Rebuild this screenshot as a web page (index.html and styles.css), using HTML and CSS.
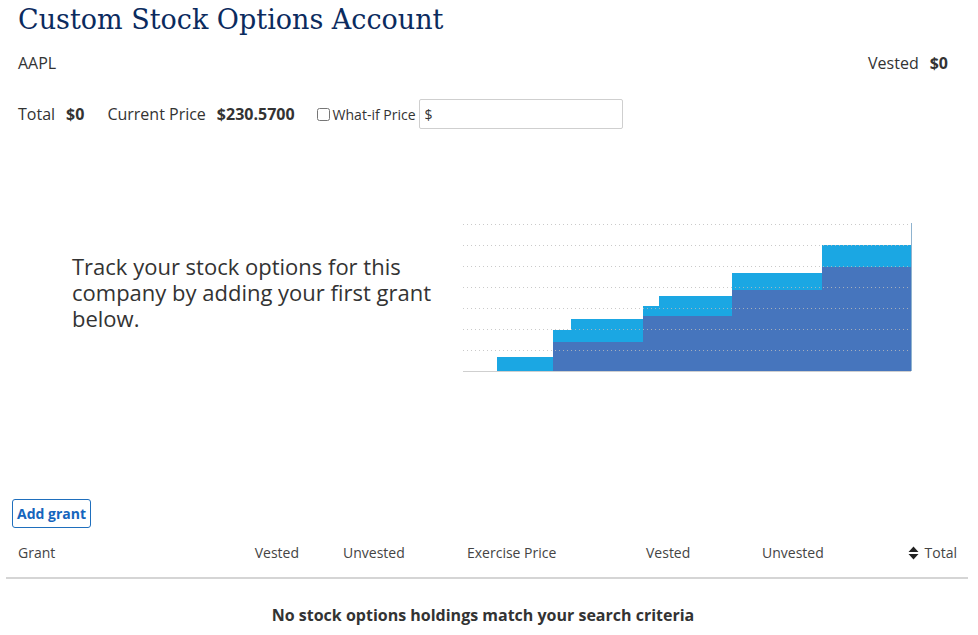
FILE: index.html
```html
<!DOCTYPE html>
<html lang="en">
<head>
<meta charset="utf-8">
<title>Custom Stock Options Account</title>
<link rel="stylesheet" href="styles.css">
</head>
<body>
<div class="page">
  <h1 class="title">Custom Stock Options Account</h1>
  <div class="summary">
    <span class="ticker">AAPL</span>
    <span class="pair"><span class="label">Vested</span><b class="value">$0</b></span>
  </div>
  <div class="prices">
    <span class="pair"><span class="label">Total</span><b class="value">$0</b></span>
    <span class="pair"><span class="label">Current Price</span><b class="value">$230.5700</b></span>
    <label class="whatif"><input type="checkbox" class="check">What-if Price</label>
    <input type="text" class="price-input" value="$">
  </div>
  <div class="hero">
    <div class="hero-col">
      <p class="hero-text">Track your stock options for this company by adding your first grant below.</p>
    </div>
    <svg class="chart" width="450" height="151" viewBox="0 0 450 151">
      <path d="M34,149 V135 H90 V108 H108 V97 H180 V84 H196 V74 H269 V51 H359 V23 H448 V149 Z" fill="#1ba7e3"/>
      <path d="M90,149 V120 H180 V94 H269 V68 H359 V45 H448 V149 Z" fill="#4675bd"/>
      <g class="grid" stroke="#bdbdbd" stroke-width="1" stroke-dasharray="1 3" opacity="0.8">
        <line x1="0" y1="2.5" x2="448" y2="2.5"/>
        <line x1="0" y1="23.5" x2="448" y2="23.5"/>
        <line x1="0" y1="44.5" x2="448" y2="44.5"/>
        <line x1="0" y1="65.5" x2="448" y2="65.5"/>
        <line x1="0" y1="86.5" x2="448" y2="86.5"/>
        <line x1="0" y1="107.5" x2="448" y2="107.5"/>
        <line x1="0" y1="128.5" x2="448" y2="128.5"/>
      </g>
      <line x1="0" y1="149.5" x2="448" y2="149.5" stroke="#cfcfcf" stroke-width="1"/>
      <line x1="448.5" y1="1" x2="448.5" y2="149" stroke="#8fb3cf" stroke-width="1"/>
    </svg>
  </div>
  <button class="add-grant" type="button">Add grant</button>
  <div class="table-head">
    <span class="th c1">Grant</span>
    <span class="th c2">Vested</span>
    <span class="th c3">Unvested</span>
    <span class="th c4">Exercise Price</span>
    <span class="th c5">Vested</span>
    <span class="th c6">Unvested</span>
    <span class="th c7"><svg class="sort" width="11" height="14" viewBox="0 0 11 14"><path d="M5.5,0.5 L10.5,6 H0.5 Z M0.5,8 H10.5 L5.5,13.5 Z" fill="#222"/></svg>Total</span>
  </div>
  <div class="empty">No stock options holdings match your search criteria</div>
</div>
</body>
</html>
```

FILE: styles.css
```css
html, body {
  margin: 0;
  padding: 0;
  background: #fff;
}

body {
  font-family: "Open Sans", "Noto Sans", "DejaVu Sans", sans-serif;
  color: #333;
  font-size: 16px;
}

.page {
  padding: 0 10px 0 6px;
}

.title {
  margin: 0;
  padding: 2px 0 0 12px;
  font-family: "DejaVu Serif", "Liberation Serif", serif;
  font-weight: normal;
  font-size: 27px;
  line-height: 36px;
  color: #0b2b5e;
}

.summary {
  display: flex;
  justify-content: space-between;
  align-items: center;
  padding: 12px 20px 0 12px;
  height: 26px;
  line-height: 26px;
}

.pair {
  display: inline-flex;
  gap: 11px;
  align-items: baseline;
}

.value {
  font-weight: 700;
  color: #333;
}

.prices {
  display: flex;
  align-items: center;
  padding: 23px 0 0 12px;
  height: 30px;
}

.prices .pair {
  margin-right: 23px;
}

.prices .pair + .pair {
  margin-right: 22px;
}

.whatif {
  display: inline-flex;
  align-items: center;
  font-size: 14px;
  color: #333;
}

.check {
  margin: 0 3px 0 0;
  width: 13px;
  height: 13px;
}

.price-input {
  box-sizing: border-box;
  margin-left: 3px;
  width: 204px;
  height: 30px;
  border: 1px solid #cfcfcf;
  border-radius: 2px;
  padding: 0 5px;
  font-family: inherit;
  font-size: 14px;
  color: #333;
}

.hero {
  display: flex;
  align-items: center;
  padding: 93px 0 0 66px;
  height: 151px;
}

.hero-col {
  width: 391px;
  flex: none;
}

.hero-text {
  margin: -12px 0 0;
  max-width: 372px;
  font-size: 22px;
  line-height: 26px;
  color: #333;
}

.chart {
  display: block;
  flex: none;
}

.add-grant {
  display: block;
  margin: 126px 0 0 6px;
  box-sizing: border-box;
  width: 79px;
  height: 29px;
  padding: 0;
  background: #fff;
  border: 1px solid #1f6fbd;
  border-radius: 3px;
  font-family: inherit;
  font-size: 14px;
  font-weight: 700;
  color: #1565bd;
}

.table-head {
  display: grid;
  grid-template-columns: 174px 131px 144px 179px 116px 130px 88px;
  align-items: center;
  height: 49px;
  border-bottom: 2px solid #d5d5d5;
  font-size: 14px;
  color: #444;
}

.th {
  white-space: nowrap;
}

.c1 { padding-left: 12px; }
.c2 { text-align: right; padding-right: 12px; }
.c3 { padding-left: 32px; }
.c4 { padding-left: 12px; }
.c5 { padding-left: 12px; }
.c6 { padding-left: 12px; }
.c7 {
  display: flex;
  justify-content: flex-end;
  align-items: center;
  gap: 6px;
  padding-right: 11px;
}

.sort {
  display: block;
}

.empty {
  text-align: center;
  font-weight: 700;
  font-size: 16px;
  line-height: 22px;
  padding: 25px 8px 0 0;
  color: #333;
}
```
